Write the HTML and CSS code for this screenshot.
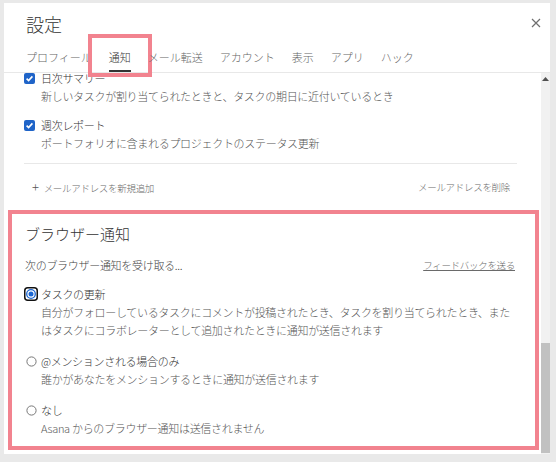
FILE: index.html
```html
<!DOCTYPE html>
<html lang="ja">
<head>
    <meta charset="UTF-8">
    <title>設定</title>
    <link rel="stylesheet" href="styles.css">
</head>
<body>

    <div class="dialog">
        <div class="dialog-header">
            <div class="title-row">
                <h1 class="dialog-title">設定</h1>
                <svg class="close-icon" width="10" height="10" viewBox="0 0 10 10">
                    <path d="M1 1 L9 9 M9 1 L1 9" stroke="#6f6f6f" stroke-width="1.2" fill="none"/>
                </svg>
            </div>
            <div class="tabs">
                <span class="tab">プロフィール</span>
                <span class="tab tab-active">通知<span class="highlight"></span></span>
                <span class="tab">メール転送</span>
                <span class="tab">アカウント</span>
                <span class="tab">表示</span>
                <span class="tab">アプリ</span>
                <span class="tab">ハック</span>
            </div>
        </div>

        <div class="dialog-body">
            <div class="scroll-content">
                <div class="email-settings">
                    <div class="check-item">
                        <span class="checkbox">
                            <svg width="11" height="11" viewBox="0 0 11 11"><rect width="11" height="11" rx="2" fill="#1f64c8"/><path d="M2.6 5.6 L4.6 7.6 L8.4 3.4" stroke="#fff" stroke-width="1.6" fill="none"/></svg>
                        </span>
                        <div>
                            <div class="item-title">日次サマリー</div>
                            <div class="item-desc">新しいタスクが割り当てられたときと、タスクの期日に近付いているとき</div>
                        </div>
                    </div>
                    <div class="check-item">
                        <span class="checkbox">
                            <svg width="11" height="11" viewBox="0 0 11 11"><rect width="11" height="11" rx="2" fill="#1f64c8"/><path d="M2.6 5.6 L4.6 7.6 L8.4 3.4" stroke="#fff" stroke-width="1.6" fill="none"/></svg>
                        </span>
                        <div>
                            <div class="item-title">週次レポート</div>
                            <div class="item-desc">ポートフォリオに含まれるプロジェクトのステータス更新</div>
                        </div>
                    </div>
                    <div class="divider"></div>
                    <div class="email-actions">
                        <span class="add-email"><span class="plus">+</span>メールアドレスを新規追加</span>
                        <span>メールアドレスを削除</span>
                    </div>
                </div>

                <div class="browser-section">
                    <h2 class="section-title">ブラウザー通知</h2>
                    <div class="section-sub">
                        <span>次のブラウザー通知を受け取る...</span>
                        <span class="feedback-link">フィードバックを送る</span>
                    </div>

                    <div class="radio-item">
                        <span class="radio">
                            <svg width="14" height="14" viewBox="0 0 14 14"><rect x="0.75" y="0.75" width="12.5" height="12.5" rx="3" fill="#fff" stroke="#111" stroke-width="1.5"/><circle cx="7" cy="7" r="4.3" fill="#fff" stroke="#1a66d2" stroke-width="1.3"/><circle cx="7" cy="7" r="2.5" fill="#1a66d2"/></svg>
                        </span>
                        <div>
                            <div class="item-title">タスクの更新</div>
                            <div class="item-desc">自分がフォローしているタスクにコメントが投稿されたとき、タスクを割り当てられたとき、また<br>はタスクにコラボレーターとして追加されたときに通知が送信されます</div>
                        </div>
                    </div>
                    <div class="radio-item">
                        <span class="radio">
                            <svg class="radio-off" width="11" height="11" viewBox="0 0 11 11"><circle cx="5.5" cy="5.5" r="4.6" fill="#fff" stroke="#777" stroke-width="1"/></svg>
                        </span>
                        <div>
                            <div class="item-title">@メンションされる場合のみ</div>
                            <div class="item-desc">誰かがあなたをメンションするときに通知が送信されます</div>
                        </div>
                    </div>
                    <div class="radio-item">
                        <span class="radio">
                            <svg class="radio-off" width="11" height="11" viewBox="0 0 11 11"><circle cx="5.5" cy="5.5" r="4.6" fill="#fff" stroke="#777" stroke-width="1"/></svg>
                        </span>
                        <div>
                            <div class="item-title">なし</div>
                            <div class="item-desc">Asana からのブラウザー通知は送信されません</div>
                        </div>
                    </div>
                </div>
            </div>

            <div class="scrollbar">
                <svg class="scroll-arrow" width="7" height="4" viewBox="0 0 7 4"><path d="M0 4 L3.5 0 L7 4 Z" fill="#505050"/></svg>
                <div class="scroll-thumb"></div>
            </div>
        </div>
    </div>

</body>
</html>
```

FILE: styles.css
```css
body {
    margin: 0;
    padding: 0;
    background-color: #e9e9e9;
    font-family: "Noto Sans CJK JP", "Noto Sans", sans-serif;
    font-weight: 300;
    color: #333;
    font-size: 11px;
    overflow: hidden;
}

.dialog {
    margin: 3px 6px 0 4px;
    height: 451px;
    background-color: #fff;
    display: flex;
    flex-direction: column;
}

.dialog-header {
    padding-top: 9px;
}

.title-row {
    display: flex;
    justify-content: space-between;
    align-items: flex-start;
    padding: 0 9px 0 22px;
}

.dialog-title {
    margin: 0;
    font-size: 18px;
    font-weight: 300;
    line-height: 24px;
    color: #333;
}

.close-icon {
    margin-top: 6px;
}

.tabs {
    display: flex;
    gap: 17px;
    padding-left: 22px;
    border-bottom: 1px solid #e8e8e8;
}

.tab {
    position: relative;
    padding: 12px 0 4px;
    line-height: 18px;
    border-bottom: 2px solid transparent;
    color: #666;
}

.tab-active {
    color: #333;
    border-bottom-color: #333;
}

/* annotation frame */
.highlight {
    position: absolute;
    left: -21px;
    top: -2px;
    width: 56px;
    height: 35px;
    border: 4px solid #f2838f;
}

.dialog-body {
    flex-grow: 1;
    display: flex;
    overflow: hidden;
}

.scroll-content {
    flex-grow: 1;
    overflow: hidden;
    padding: 0 2px 0 4px;
}

.email-settings {
    margin-top: -4px;
    padding: 0 22px 0 16px;
}

.check-item {
    display: grid;
    grid-template-columns: 17px 1fr;
    margin-bottom: 11px;
}

.checkbox {
    height: 18px;
    display: flex;
    align-items: center;
}

.item-title {
    line-height: 18px;
    letter-spacing: -0.3px;
    color: #333;
}

.item-desc {
    line-height: 18px;
    letter-spacing: -0.3px;
    color: #555;
}

.divider {
    height: 1px;
    background-color: #e8e8e8;
}

.email-actions {
    display: flex;
    justify-content: space-between;
    padding: 14px 7px 0 8px;
    line-height: 18px;
    font-size: 9.5px;
    letter-spacing: -0.3px;
    color: #6a6a6a;
}

.plus {
    font-size: 13px;
    margin-right: 5px;
    color: #555;
}

.browser-section {
    margin-top: 13px;
    border: 4px solid #f2838f;
    padding: 9px 20px 9px 13px;
}

.section-title {
    margin: 0;
    font-size: 15px;
    font-weight: 300;
    line-height: 22px;
    color: #333;
}

.section-sub {
    display: flex;
    justify-content: space-between;
    align-items: center;
    margin-top: 11px;
    line-height: 18px;
    letter-spacing: -0.3px;
    color: #444;
}

.feedback-link {
    font-size: 9.5px;
    color: #6a6a6a;
    text-decoration: underline;
}

.radio-item {
    display: grid;
    grid-template-columns: 16px 1fr;
    margin-top: 13px;
}

.section-sub + .radio-item {
    margin-top: 11px;
}

.radio {
    height: 18px;
    display: flex;
    align-items: center;
    margin-left: -1px;
}

.radio-off {
    margin-left: 2px;
}

.scrollbar {
    width: 9px;
    background-color: #f1f1f1;
    display: flex;
    flex-direction: column;
    align-items: center;
    justify-content: space-between;
}

.scroll-arrow {
    margin-top: 4px;
}

.scroll-thumb {
    width: 9px;
    height: 110px;
    background-color: #c1c1c1;
    margin-bottom: 1px;
}
```
